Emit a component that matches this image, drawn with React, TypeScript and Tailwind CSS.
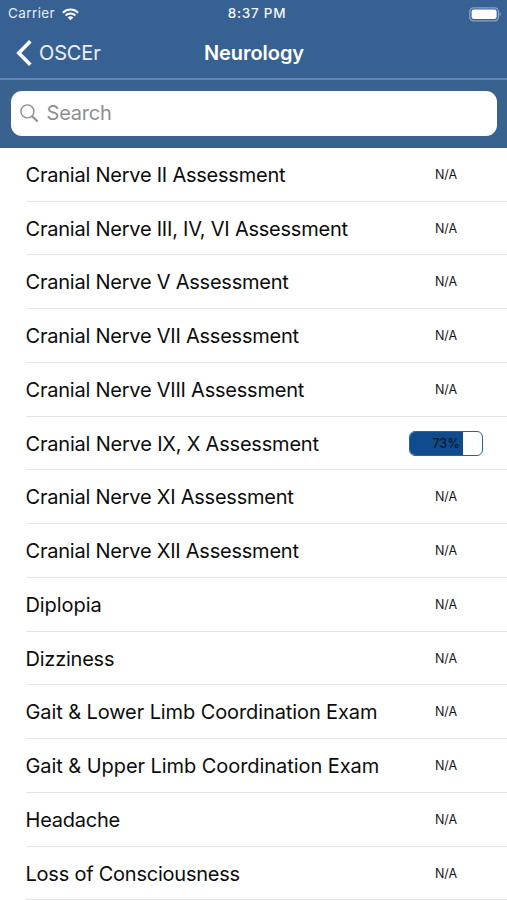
type Row = { name: string; score?: number; tracking?: string };

const rows: Row[] = [
  { name: 'Cranial Nerve II Assessment' },
  { name: 'Cranial Nerve III, IV, VI Assessment' },
  { name: 'Cranial Nerve V Assessment' },
  { name: 'Cranial Nerve VII Assessment' },
  { name: 'Cranial Nerve VIII Assessment' },
  { name: 'Cranial Nerve IX, X Assessment', score: 73, tracking: 'tracking-[-0.2px]' },
  { name: 'Cranial Nerve XI Assessment' },
  { name: 'Cranial Nerve XII Assessment' },
  { name: 'Diplopia', tracking: 'tracking-[-0.08px]' },
  { name: 'Dizziness' },
  { name: 'Gait & Lower Limb Coordination Exam', tracking: 'tracking-[-0.1px]' },
  { name: 'Gait & Upper Limb Coordination Exam', tracking: 'tracking-[-0.06px]' },
  { name: 'Headache' },
  { name: 'Loss of Consciousness' },
];

function StatusBar() {
  return (
    <div className="grid h-[27px] grid-cols-3 items-center pl-[8px] pr-[6px] pt-px text-[13.5px] leading-none">
      <div className="flex items-center gap-[7px] text-[#e3ecf6]">
        <span className="tracking-[0.4px]">Carrier</span>
        <svg width="17" height="13" viewBox="0 0 17 13" fill="none" stroke="#fff" strokeWidth="2.1">
          <path d="M0.9 4.7C5.1 0.5 11.9 0.5 16.1 4.7" />
          <path d="M3.6 7.5C6.3 4.8 10.7 4.8 13.4 7.5" />
          <path d="M8.5 12.2L5.7 9.4C7.2 7.9 9.8 7.9 11.3 9.4Z" fill="#fff" stroke="none" />
        </svg>
      </div>
      <div className="pl-[5px] text-center font-medium tracking-[0.75px] text-[#f1f6fc]">8:37 PM</div>
      <div className="flex justify-end">
        <svg width="32" height="15" viewBox="0 0 32 15" fill="none">
          <rect x="0.8" y="0.8" width="28.6" height="13" rx="3.8" stroke="#86a5cb" strokeWidth="1.3" />
          <rect x="2.6" y="2.6" width="25" height="9.4" rx="2" fill="#fff" />
          <path d="M30.6 5v4.6c1.4-.6 1.4-4 0-4.6Z" fill="#86a5cb" />
        </svg>
      </div>
    </div>
  );
}

function Score({ value }: { value: number }) {
  return (
    <div className="relative h-[25px] w-[74px] overflow-hidden rounded-[6px] border border-[#2b5f9b] bg-white">
      <div className="h-full bg-[#0f4b8d]" style={{ width: `${value}%` }} />
      <span className="absolute inset-0 flex items-center justify-center pt-px text-[12.5px] font-medium text-[#08182c]">
        {value}%
      </span>
    </div>
  );
}

export default function App() {
  return (
    <div className="flex h-[900px] w-[507px] flex-col overflow-hidden bg-white font-[Inter,'Liberation_Sans',sans-serif]">
      <header className="h-[147.8px] shrink-0 bg-[#386193] text-white">
        <StatusBar />
        <nav className="grid h-[51px] grid-cols-3 items-center pl-[16px] pr-[16px]">
          <div className="flex items-center gap-[7px] text-[20px] tracking-[-0.15px] text-[#eaf1fa]">
            <svg width="16" height="26" viewBox="0 0 16 26" fill="none" stroke="#fff" strokeWidth="3.6">
              <path d="M14.3 1.3L2.8 13L14.3 24.7" />
            </svg>
            <span>OSCEr</span>
          </div>
          <h1 className="pl-px text-center text-[20px] font-semibold tracking-[-0.05px]">Neurology</h1>
        </nav>
        <div className="h-[69.8px] border-t-2 border-[#6486b0] bg-[#3a628f] px-[10.5px] pt-[11px]">
          <div className="flex h-[44.5px] items-center gap-[8px] rounded-[11px] bg-white pl-[9px] text-[#8e8e93]">
            <svg width="19" height="19" viewBox="0 0 19 19" fill="none" stroke="currentColor">
              <circle cx="7.4" cy="7.4" r="6.5" strokeWidth="1.4" />
              <path d="M12 12L17.6 17.6" strokeWidth="2.1" />
            </svg>
            <span className="text-[20px] tracking-[-0.2px]">Search</span>
          </div>
        </div>
      </header>
      <ul className="shrink-0">
        {rows.map((row) => (
          <li key={row.name} className="flex h-[53.75px] pl-[25.5px]">
            <div className="flex flex-1 items-center justify-between border-b border-[#e6e6e8] pr-[24px] pt-[1.4px]">
              <span
                className={`whitespace-nowrap text-[20px] text-[#0c0c0c] ${row.tracking ?? 'tracking-[-0.23px]'}`}
              >
                {row.name}
              </span>
              {row.score === undefined ? (
                <span className="w-[74px] pt-px text-center text-[12.5px] tracking-[0px] text-[#151515]">N/A</span>
              ) : (
                <Score value={row.score} />
              )}
            </div>
          </li>
        ))}
      </ul>
    </div>
  );
}
